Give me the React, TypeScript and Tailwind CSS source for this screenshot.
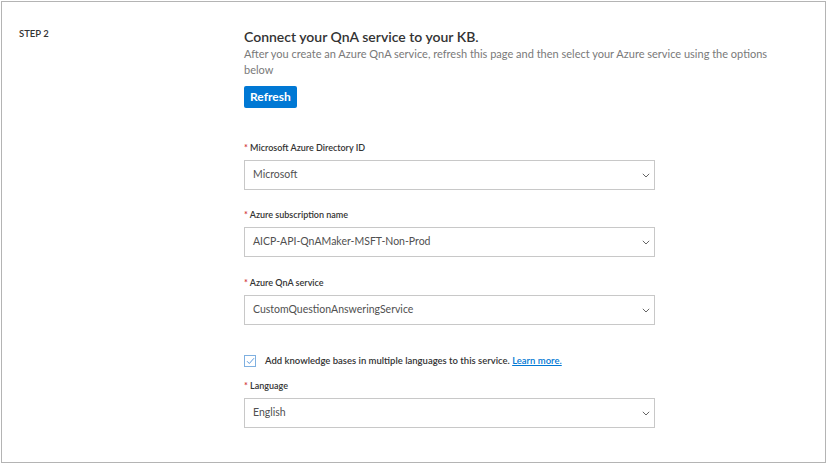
import React from "react";

const font = { fontFamily: 'Lato, "Noto Sans", sans-serif' };

function Chevron() {
  return (
    <svg width="8" height="5" viewBox="0 0 8 5" className="shrink-0">
      <path d="M0.8 0.8l3.2 3.2 3.2-3.2" fill="none" stroke="#666" strokeWidth="1" />
    </svg>
  );
}

function Field({ label, value }: { label: string; value: string }) {
  return (
    <div className="flex flex-col">
      <label className="text-[9px] leading-[16px] font-semibold text-[#333]">
        <span className="text-[#d13438]">*</span> {label}
      </label>
      <div className="mt-[4px] flex h-[30px] w-[411px] items-center justify-between border border-[#c8c8c8] bg-white pl-[8px] pr-[4px]">
        <span className="text-[10.5px] text-[#505050]">{value}</span>
        <Chevron />
      </div>
    </div>
  );
}

export default function App() {
  return (
    <div className="h-[464px] w-[827px] bg-white p-px" style={font}>
      <div className="flex h-[462px] w-[825px] border border-[#b4b4b4]">
        <div className="w-[242px] shrink-0 pl-[17px] pt-[24px]">
          <div className="text-[9.5px] leading-[16px] font-semibold text-[#333]">STEP 2</div>
        </div>
        <div className="flex w-[540px] flex-col pt-[25px]">
          <h2 className="text-[14px] leading-[19px] font-semibold text-[#333]">
            Connect your QnA service to your KB.
          </h2>
          <p className="text-[11px] leading-[16px] text-[#797979]">
            After you create an Azure QnA service, refresh this page and then select your Azure service using the options below
          </p>
          <div className="mt-[5px]">
            <button className="h-[22px] rounded-[2px] bg-[#0078d4] px-[6px] text-[12px] font-bold text-white">
              Refresh
            </button>
          </div>
          <div className="mt-[32px]">
            <Field label="Microsoft Azure Directory ID" value="Microsoft" />
          </div>
          <div className="mt-[17px]">
            <Field label="Azure subscription name" value="AICP-API-QnAMaker-MSFT-Non-Prod" />
          </div>
          <div className="mt-[18px]">
            <Field label="Azure QnA service" value="CustomQuestionAnsweringService" />
          </div>
          <div className="mt-[28px] flex h-[16px] items-center gap-[9px]">
            <div className="flex h-[12px] w-[12px] items-center justify-center border border-[#7fb0e0]">
              <svg width="9" height="8" viewBox="0 0 9 8">
                <path d="M1 4.2l2.3 2.3L8 1.2" fill="none" stroke="#4a8fd8" strokeWidth="0.9" />
              </svg>
            </div>
            <span className="text-[9.5px] font-semibold text-[#333]">
              Add knowledge bases in multiple languages to this service.{" "}
              <a className="text-[#0078d4] underline">Learn more.</a>
            </span>
          </div>
          <div className="mt-[9px]">
            <Field label="Language" value="English" />
          </div>
        </div>
      </div>
    </div>
  );
}
